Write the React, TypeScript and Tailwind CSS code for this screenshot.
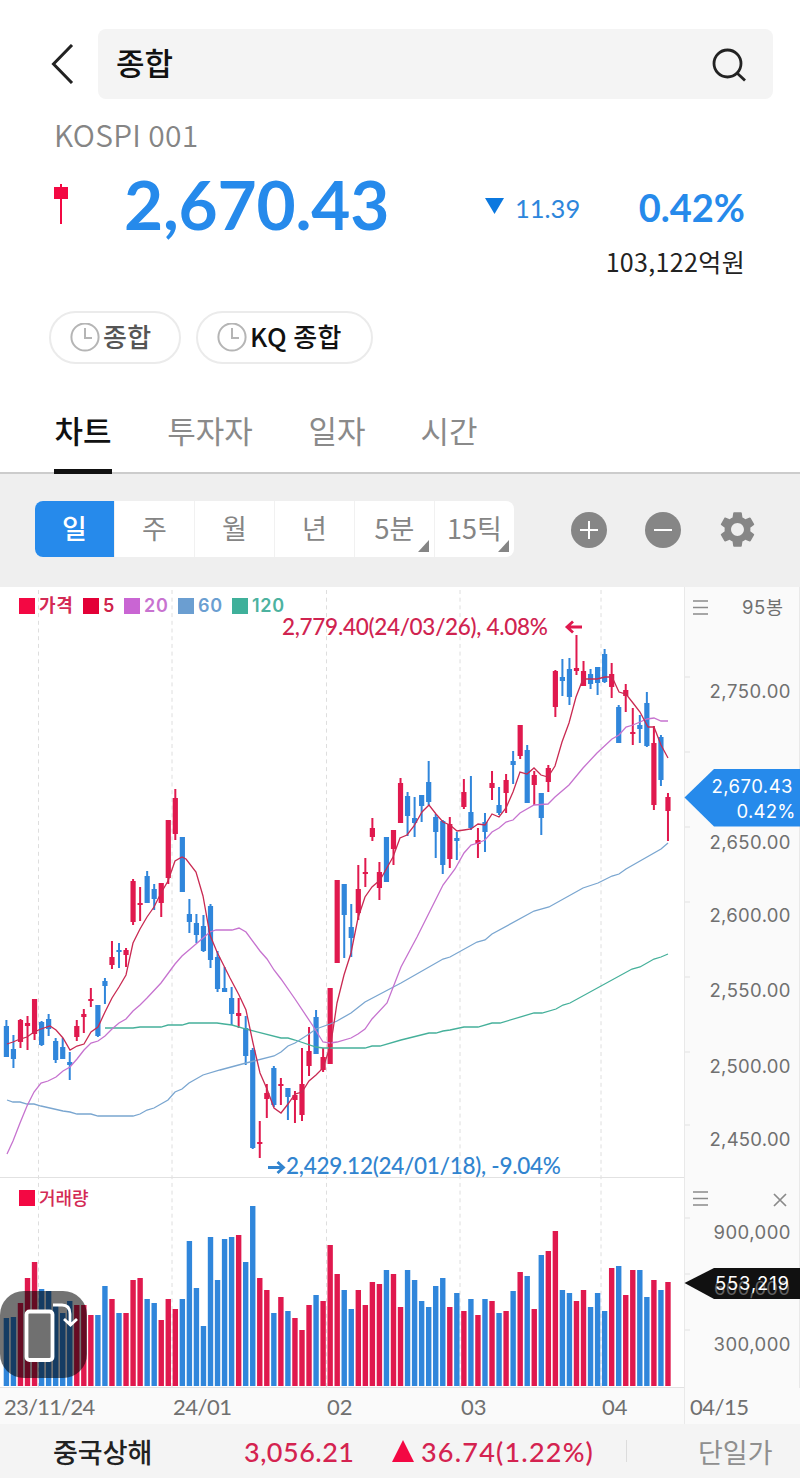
import clsx from 'clsx'
import { MdSettings } from 'react-icons/md'

const RED = '#e0194e'
const BLUE = '#3086db'

type Candle = [color: 'r' | 'b', high: number, top: number, bottom: number, low: number]

const STEP = 7.038
const FIRST = 6.4
const barX = (index: number) => FIRST + STEP * index

const candles: Candle[] = [
  ['b', 1020, 1026, 1057, 1057],
  ['b', 1035, 1049, 1059, 1068],
  ['r', 1019, 1020, 1042, 1048],
  ['r', 1016, 1023, 1026, 1050],
  ['r', 999, 999, 1034, 1040],
  ['b', 1021, 1022, 1045, 1046],
  ['b', 1014, 1019, 1029, 1036],
  ['b', 1038, 1041, 1060, 1063],
  ['b', 1038, 1047, 1059, 1059],
  ['b', 1052, 1062, 1065, 1080],
  ['r', 1020, 1026, 1037, 1041],
  ['r', 1009, 1014, 1017, 1033],
  ['r', 988, 999, 1001, 1007],
  ['b', 1005, 1005, 1036, 1037],
  ['b', 978, 981, 986, 1004],
  ['r', 941, 957, 965, 969],
  ['b', 943, 950, 952, 968],
  ['r', 948, 950, 955, 967],
  ['r', 879, 881, 922, 925],
  ['r', 887, 903, 905, 921],
  ['b', 871, 876, 903, 903],
  ['b', 884, 889, 899, 910],
  ['r', 883, 883, 903, 917],
  ['r', 820, 820, 878, 884],
  ['r', 789, 798, 834, 840],
  ['b', 837, 837, 892, 892],
  ['b', 899, 914, 922, 933],
  ['b', 914, 923, 935, 943],
  ['b', 915, 926, 951, 952],
  ['b', 904, 906, 960, 968],
  ['b', 951, 957, 989, 992],
  ['b', 967, 988, 992, 992],
  ['b', 987, 998, 1014, 1025],
  ['r', 998, 1013, 1016, 1028],
  ['b', 1016, 1028, 1056, 1065],
  ['b', 1048, 1050, 1148, 1149],
  ['r', 1121, 1142, 1144, 1158],
  ['r', 1084, 1093, 1099, 1118],
  ['b', 1066, 1068, 1105, 1107],
  ['r', 1078, 1084, 1086, 1105],
  ['b', 1088, 1088, 1097, 1120],
  ['r', 1091, 1095, 1100, 1123],
  ['r', 1048, 1084, 1115, 1121],
  ['r', 1027, 1051, 1066, 1076],
  ['b', 1010, 1017, 1054, 1054],
  ['r', 1048, 1057, 1070, 1072],
  ['r', 988, 988, 1064, 1064],
  ['r', 880, 880, 963, 963],
  ['b', 884, 884, 915, 958],
  ['b', 904, 927, 938, 957],
  ['r', 865, 889, 913, 920],
  ['r', 858, 872, 874, 887],
  ['r', 818, 828, 837, 841],
  ['r', 862, 872, 888, 900],
  ['b', 837, 837, 882, 882],
  ['r', 830, 830, 849, 865],
  ['r', 778, 783, 823, 823],
  ['b', 792, 796, 816, 836],
  ['b', 797, 818, 823, 837],
  ['b', 795, 795, 806, 822],
  ['b', 761, 782, 802, 805],
  ['b', 814, 817, 832, 858],
  ['b', 820, 821, 865, 874],
  ['r', 817, 824, 859, 868],
  ['b', 832, 838, 841, 860],
  ['r', 779, 792, 807, 809],
  ['b', 776, 812, 828, 830],
  ['r', 828, 840, 844, 858],
  ['b', 813, 822, 832, 852],
  ['r', 771, 783, 788, 800],
  ['b', 787, 805, 813, 815],
  ['r', 774, 780, 793, 813],
  ['b', 751, 761, 765, 784],
  ['r', 725, 725, 756, 759],
  ['b', 745, 750, 803, 803],
  ['r', 771, 775, 785, 805],
  ['b', 793, 793, 818, 835],
  ['r', 765, 768, 782, 792],
  ['r', 670, 671, 707, 717],
  ['b', 659, 677, 681, 696],
  ['b', 658, 669, 697, 705],
  ['r', 635, 668, 671, 675],
  ['r', 661, 671, 686, 686],
  ['b', 669, 674, 684, 689],
  ['b', 667, 667, 683, 695],
  ['b', 649, 654, 682, 683],
  ['r', 663, 674, 687, 698],
  ['b', 705, 707, 743, 743],
  ['r', 684, 690, 696, 712],
  ['r', 708, 732, 734, 745],
  ['b', 715, 725, 729, 743],
  ['b', 692, 703, 746, 747],
  ['r', 726, 743, 805, 810],
  ['b', 735, 737, 780, 786],
  ['r', 793, 797, 811, 841],
]

const volumes =
  'b68 b69 r83 r108 r124 b97 b95 b81 b73 b85 r81 r81 r71 b71 b100 r87 b73 r73 r106 r108 b87 b83 r66 r87 ' +
  'r77 b87 b145 b98 b60 b149 b106 b147 b149 r151 b124 b180 r108 r96 b73 r89 b75 r68 r56 r81 b91 r85 r141 r112 ' +
  'b96 b77 r96 r81 r104 r102 b116 r112 r79 b116 b106 b85 b79 b100 b108 r79 b93 r75 b87 r71 b87 r85 b73 r75 ' +
  'b95 r114 b110 r77 b131 r135 r155 b96 b93 r85 r96 b79 b93 b75 r118 b120 r91 r116 b116 b89 r106 b96 r104'

const averages = [
  {
    color: '#45b09a',
    points:
      '105,1028 133,1028 140,1027 161,1027 168,1025 182,1025 189,1023 217,1023 224,1024 232,1025 246,1029 281,1038 288,1038 295,1040 316,1047 323,1048 365,1048 372,1046 380,1046 401,1040 429,1033 436,1033 443,1031 450,1030 464,1027 478,1027 492,1023 500,1023 534,1013 542,1013 556,1009 563,1005 570,1003 632,969 640,967 654,959 661,957 668,954',
  },
  {
    color: '#7aa6d0',
    points:
      '7,1100 13,1102 20,1102 27,1104 34,1104 41,1106 63,1111 70,1112 77,1114 91,1114 98,1116 133,1116 140,1114 147,1110 154,1108 168,1100 175,1092 182,1089 189,1083 203,1075 220,1070 246,1063 274,1056 281,1052 288,1046 295,1043 309,1034 316,1029 330,1024 337,1021 351,1013 365,1002 401,983 443,959 450,957 477,942 485,940 492,934 534,911 549,907 583,888 598,883 612,876 619,874 626,869 661,849 668,843',
  },
  {
    color: '#c673cf',
    points:
      '7,1154 13,1141 20,1123 27,1106 34,1092 41,1083 48,1081 56,1077 63,1071 70,1067 77,1059 84,1050 91,1043 98,1041 105,1036 112,1029 119,1023 126,1019 133,1011 140,1005 147,998 161,983 175,964 182,956 189,950 196,944 203,938 210,932 216,930 232,930 239,928 246,932 260,951 267,959 274,970 281,979 295,999 313,1026 323,1042 330,1043 337,1042 351,1038 358,1034 365,1029 372,1019 387,1003 401,967 417,937 433,905 443,885 455,869 464,853 471,845 478,843 485,840 492,832 499,828 506,822 513,820 520,813 534,805 548,804 555,797 569,785 583,768 597,753 612,739 619,735 626,727 633,725 640,722 647,719 654,718 661,721 668,721',
  },
  {
    color: '#c92a52',
    points:
      '7,1044 13,1042 20,1039 27,1037 34,1032 41,1029 50,1026 56,1030 63,1038 70,1050 77,1046 84,1044 91,1032 98,1027 105,1012 112,998 119,987 126,975 133,943 140,929 147,917 154,907 161,893 168,881 175,861 182,857 186,859 196,872 203,896 210,935 217,952 230,978 239,995 246,1010 253,1043 260,1073 267,1089 274,1108 281,1113 288,1104 295,1094 302,1092 309,1081 316,1075 323,1068 330,1047 333,1030 337,1003 344,975 351,953 358,918 365,897 372,887 380,880 384,873 393,857 400,838 407,835 414,826 422,812 429,805 436,814 443,822 450,825 457,831 464,830 471,829 478,824 485,825 492,814 499,817 506,808 513,792 520,772 527,774 534,768 541,775 548,777 555,766 562,742 569,723 576,697 583,679 590,679 597,679 605,677 612,677 619,692 626,694 633,703 640,712 648,727 654,727 661,745 668,758',
  },
]

const gridLines = [38.5, 172, 326.5, 460, 601]

const priceLabels = [
  { value: '2,750.00', y: 691 },
  { value: '2,650.00', y: 842 },
  { value: '2,600.00', y: 915 },
  { value: '2,550.00', y: 990.5 },
  { value: '2,500.00', y: 1066 },
  { value: '2,450.00', y: 1139.5 },
]

const legend = [
  { label: '가격', box: 'bg-[#f30843]', text: 'text-[#d42a55] w-[48px]' },
  { label: '5', box: 'bg-[#e30037]', text: 'text-[#cf2049] w-[25px]' },
  { label: '20', box: 'bg-[#c965d3]', text: 'text-[#c873d0] w-[38px]' },
  { label: '60', box: 'bg-[#6b9ed1]', text: 'text-[#6b9ed1] w-[38px]' },
  { label: '120', box: 'bg-[#3fb09a]', text: 'text-[#4db29f]' },
]

const tabs = [
  { label: '차트', className: 'w-[58px]' },
  { label: '투자자', className: 'w-[88px]' },
  { label: '일자', className: 'w-[58px]' },
  { label: '시간', className: 'w-[58px]' },
]

const periods = ['일', '주', '월', '년', '5분', '15틱']

const SearchHeader = () => (
  <header className="flex h-[99px] items-end pr-[27px] pl-[51px]">
    <svg className="mb-[15px] h-10 w-6" viewBox="0 0 24 40" fill="none" stroke="#222" strokeWidth="3">
      <path d="M21 1 2.5 20 21 39" />
    </svg>
    <div className="ml-[23px] flex h-[70px] flex-1 items-center justify-between rounded-lg bg-[#f4f4f4] pr-[26px] pl-[18px]">
      <h1 className="pb-[6px] text-[31px] leading-none font-medium text-[#111]">종합</h1>
      <svg className="mt-[2px] h-9 w-9" viewBox="0 0 36 36" fill="none" stroke="#222" strokeWidth="2.8">
        <circle cx="16.5" cy="16.5" r="13.5" />
        <path d="m26 26 8 7.500" />
      </svg>
    </div>
  </header>
)

const Quote = () => (
  <section className="h-[212px] pr-[55px] pl-[54px]">
    <p className="pt-[14px] text-[30px] leading-[42px] font-[350] tracking-[0.3px] text-[#858585]">KOSPI 001</p>
    <div className="mt-[8px] flex h-[86px] items-center">
      <svg className="mb-[5px] h-10 w-[14px]" viewBox="0 0 14 40" fill="#f30843">
        <path d="M6 0h2v40H6zM0 3h14v12H0z" />
      </svg>
      <strong className="ml-[56px] w-[361px] pb-[4px] text-[67.5px] leading-none font-bold tracking-[-0.2px] text-[#268aeb] font-[Lato]">
        2,670.43
      </strong>
      <svg className="h-4 w-[19px]" viewBox="0 0 19 16" fill="#0b78df">
        <path d="M0 0h19L9.5 16z" />
      </svg>
      <span className="ml-[11px] pt-[4px] text-[25.5px] text-[#2d86dc] font-[Lato]">11.39</span>
      <strong className="ml-auto pt-[3px] text-[38px] font-bold text-[#268aeb] font-[Lato]">0.42%</strong>
    </div>
    <p className="text-right text-[25px] leading-[24px] tracking-[0.35px] text-[#222]">103,122억원</p>
  </section>
)

const Clock = () => (
  <svg className="h-[30px] w-[30px]" viewBox="0 0 30 30" fill="none" stroke="#b5b5b5" strokeWidth="2">
    <circle cx="15" cy="14" r="13.6" />
    <path d="M15 5v10h7" />
  </svg>
)

const Chips = () => (
  <div className="flex gap-[15px] pl-[49px] text-[26px] leading-none font-medium tracking-[0.4px]">
    <button className="flex h-[53px] w-[132px] items-center rounded-full border-2 border-[#ebebeb] pl-[19px] text-[#555]">
      <Clock />
      <span className="ml-[3px] pb-[3px]">종합</span>
    </button>
    <button className="flex h-[53px] w-[177px] items-center rounded-full border-2 border-[#ebebeb] pl-[19px] text-[#111]">
      <Clock />
      <span className="ml-[3px] pb-[3px]">KQ 종합</span>
    </button>
  </div>
)

const Tabs = () => (
  <nav className="flex h-[110px] items-end gap-[54px] border-b-2 border-[#ccc] pl-[54px] text-[31px] leading-none">
    {tabs.map(({ label, className }, i) => (
      <button
        key={label}
        className={clsx(
          'mb-[-2px] h-[60px] border-b-[5px] pb-[24px] text-center whitespace-nowrap',
          className,
          i === 0 ? 'border-[#111] font-medium text-[#111]' : 'border-transparent text-[#8a8a8a]',
        )}
      >
        {label}
      </button>
    ))}
  </nav>
)

const Toolbar = () => (
  <div className="flex h-[113px] items-center bg-[#efefef] pb-[2px] pl-[35px]">
    <div className="mb-[2px] flex h-[56px] w-[479px] overflow-hidden rounded-lg bg-white">
      {periods.map((label, i) => (
        <button
          key={label}
          className={clsx(
            'relative flex-1 pb-[2px] text-[27px] leading-none',
            i === 0 ? 'bg-[#268aeb] font-medium text-white' : 'border-l border-[#f1f1f1] text-[#858585]',
          )}
        >
          {label}
          {i > 3 && (
            <svg className="absolute right-[5px] bottom-[5px] h-3 w-[11px]" viewBox="0 0 11 12" fill="#858585">
              <path d="M11 0v12H0z" />
            </svg>
          )}
        </button>
      ))}
    </div>
    <svg className="ml-[57px] h-9 w-9" viewBox="0 0 36 36" stroke="white" strokeWidth="2">
      <circle cx="18" cy="18" r="18" fill="#868686" stroke="none" />
      <path d="M9 18h18M18 9v18" />
    </svg>
    <svg className="ml-[38px] h-9 w-9" viewBox="0 0 36 36" stroke="white" strokeWidth="2">
      <circle cx="18" cy="18" r="18" fill="#868686" stroke="none" />
      <path d="M9 18h18" />
    </svg>
    <MdSettings className="ml-[35px] text-[#868686]" size={43} />
  </div>
)

const Plot = () => (
  <svg className="block h-[801px] w-[684px]" viewBox="0 587 684 801">
    {gridLines.map((x) => (
      <path key={x} d={`M${x} 590V1388`} stroke="#dedede" strokeDasharray="4 3.7" />
    ))}
    <path d="M0 1177.5H684M0 1387.5H684" stroke="#e2e2e2" />
    {candles.map(([color, high, top, bottom, low], i) => (
      <g key={i} fill={color === 'r' ? RED : BLUE}>
        <rect x={barX(i) - 1} y={high} width="2" height={low - high} />
        <rect x={barX(i) - 2.6} y={top} width="5.2" height={bottom - top} />
      </g>
    ))}
    {averages.map(({ color, points }) => (
      <polyline key={color} points={points} fill="none" stroke={color} strokeWidth="1.3" />
    ))}
    {volumes.split(' ').map((bar, i) => {
      const height = Number(bar.slice(1))
      return (
        <rect
          key={i}
          x={barX(i) - 2.7}
          y={1386 - height}
          width="5.4"
          height={height}
          fill={bar[0] === 'r' ? RED : BLUE}
        />
      )
    })}
    <g className="font-[Lato] text-[22.5px] font-medium">
      <text x="282" y="635" fill="#d02350" textLength="266">
        2,779.40(24/03/26), 4.08%
      </text>
      <text x="286" y="1174" fill="#3184cf" textLength="275">
        2,429.12(24/01/18), -9.04%
      </text>
    </g>
    <path d="M582 627H567M573 621.5 567 627l6 5.5" fill="none" stroke="#e0194e" strokeWidth="2.8" />
    <path d="M268 1167.5h15M277.5 1162l6 5.5-6 5.5" fill="none" stroke="#3184cf" strokeWidth="2.8" />
  </svg>
)

const Axis = () => (
  <svg className="block h-[801px] w-[116px] bg-[#fafafa] font-[Inter]" viewBox="684 587 116 801">
    <path d="M684.5 587V1388M799.5 587V1388" stroke="#e9e9e9" />
    {[677, 752, 827, 902, 977, 1052, 1125, 1218, 1274, 1330].map((y) => (
      <path key={y} d={`M685 ${y}h5`} stroke="#e2e2e2" />
    ))}
    <path d="M693 601h15M693 607.5h15M693 614h15M693 1192h15M693 1198.5h15M693 1205h15" stroke="#8a8a8a" strokeWidth="1.6" />
    <path d="m774 1194 12 12M786 1194l-12 12" stroke="#8a8a8a" strokeWidth="1.7" />
    <g fill="#707070" fontSize="18.5">
      <text x="742" y="614" textLength="41" className="font-[Inter,'Noto_Sans_CJK_KR']">
        95봉
      </text>
      {priceLabels.map(({ value, y }) => (
        <text key={value} x="709.5" y={y + 6.5} textLength="81">
          {value}
        </text>
      ))}
      <text x="713.5" y="1239" textLength="77">
        900,000
      </text>
      <text x="713.5" y="1351" textLength="77">
        300,000
      </text>
    </g>
    <path d="M684.5 797.5 714 769h86v57.500h-86z" fill="#268aeb" />
    <g fill="white" fontSize="18.5">
      <text x="711.5" y="793" textLength="81">
        2,670.43
      </text>
      <text x="736.5" y="818" textLength="59">
        0.42%
      </text>
    </g>
    <path d="M684.5 1283 714 1268h86v31h-86z" fill="#111" />
    <text x="714" y="1295" textLength="76" fontSize="18.5" fill="#606060">
      600,000
    </text>
    <text x="715" y="1290" textLength="74" fontSize="18.5" fill="white">
      553,219
    </text>
  </svg>
)

const Chart = () => (
  <section className="relative">
    <div className="flex">
      <Plot />
      <Axis />
    </div>
    <div className="absolute top-[10px] left-[19px] flex items-center text-[18px] leading-none font-semibold font-[Inter,'Noto_Sans_CJK_KR']">
      {legend.map(({ label, box, text }) => (
        <span key={label} className="flex items-center">
          <i className={clsx('h-4 w-4', box)} />
          <span className={clsx('pl-1 tracking-[0.7px]', text)}>{label}</span>
        </span>
      ))}
    </div>
    <div className="absolute top-[601px] left-[19px] flex items-center text-[18px] leading-none font-medium text-[#d42a55]">
      <i className="h-4 w-4 bg-[#f30843]" />
      <span className="pb-[2px] pl-1">거래량</span>
    </div>
    <button className="absolute top-[704px] left-0 h-[87px] w-[87px] rounded-[24px] bg-black/55">
      <svg className="h-full w-full" viewBox="0 0 87 87" fill="none" stroke="white">
        <rect x="26.500" y="20.500" width="26" height="48.500" rx="3" fill="#707070" strokeWidth="3.800" />
        <path d="M53 14h9q8 0 8 9v10M64 28l6.500 6 6.500-6" strokeWidth="2.800" />
      </svg>
    </button>
  </section>
)

const DateAxis = () => (
  <div className="flex h-[36px] bg-[#fafafa] pl-[4px] text-[22px] leading-[38px] text-[#707070] font-[Lato]">
    <span className="w-[169px] tracking-[-0.75px]">23/11/24</span>
    <span className="w-[154px] tracking-[-0.5px]">24/01</span>
    <span className="w-[134px]">02</span>
    <span className="w-[141px]">03</span>
    <span className="w-[82px]">04</span>
    <span className="flex-1 border-l border-[#e9e9e9] pl-[5px] tracking-[-0.5px]">04/15</span>
  </div>
)

const Ticker = () => (
  <footer className="flex h-[54px] items-center bg-[#f4f4f4] pl-[53px] text-[27px] leading-none">
    <span className="w-[191px] font-medium text-[#222]">중국상해</span>
    <span className="w-[148px] font-medium tracking-[0.5px] text-[#d42350] font-[Lato]">3,056.21</span>
    <svg className="h-[22px] w-[22px]" viewBox="0 0 22 22" fill="#f30843">
      <path d="M11 0 22 22H0z" />
    </svg>
    <span className="ml-[7px] w-[205px] font-medium tracking-[1.2px] text-[#d42350] font-[Lato]">36.74(1.22%)</span>
    <i className="h-[22px] w-px bg-[#dcdcdc]" />
    <span className="ml-[71px] whitespace-nowrap text-[#8f8f8f]">단일가</span>
  </footer>
)

export default function App() {
  return (
    <main className="h-[1478px] w-[800px] overflow-hidden bg-white font-['Noto_Sans_CJK_KR',sans-serif]">
      <SearchHeader />
      <Quote />
      <Chips />
      <Tabs />
      <Toolbar />
      <Chart />
      <DateAxis />
      <Ticker />
    </main>
  )
}
